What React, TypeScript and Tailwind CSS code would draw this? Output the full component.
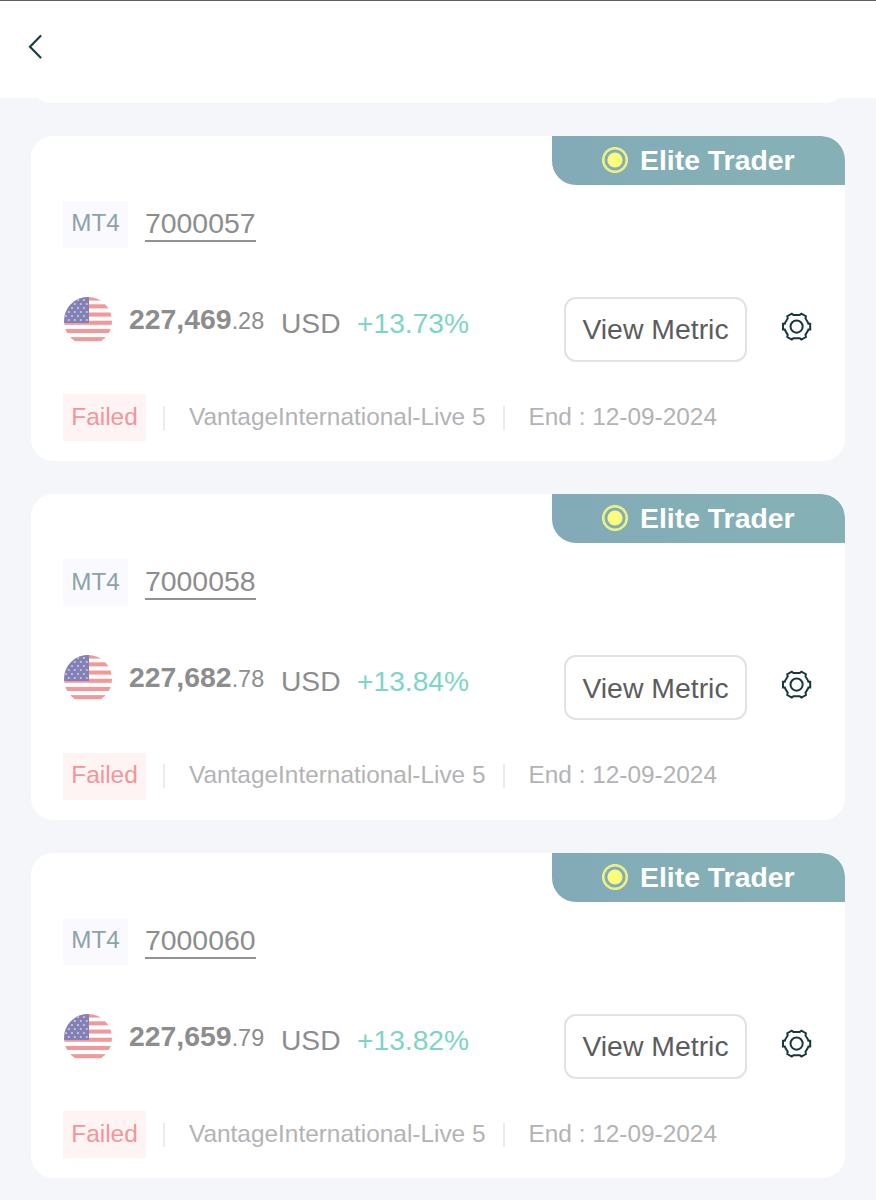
type Account = {
  login: string
  whole: string
  cents: string
  change: string
}

const accounts: Account[] = [
  { login: '7000057', whole: '227,469', cents: '.28', change: '+13.73%' },
  { login: '7000058', whole: '227,682', cents: '.78', change: '+13.84%' },
  { login: '7000060', whole: '227,659', cents: '.79', change: '+13.82%' },
]

export default function App() {
  return (
    <div className="flex h-[1200px] w-[876px] flex-col overflow-hidden bg-[#f5f6f9] font-['Liberation_Sans',Arial,sans-serif]">
      <header className="flex h-[98px] shrink-0 border-t border-[#5f5f61] bg-white pt-[33px] pl-[27px]">
        <button aria-label="Back" className="h-[26px] w-[16px]">
          <svg viewBox="0 0 16 26" className="h-[26px] w-[16px]" fill="none" stroke="#173f45" strokeWidth="2.2">
            <path d="M13.5 2 3 12.8l10.5 10.7" strokeLinecap="round" />
          </svg>
        </button>
      </header>

      <main className="flex flex-col px-[31px]">
        <div className="-mt-[20px] h-[25px] rounded-b-[20px] bg-white" />
        <div className="mt-[33px] flex flex-col gap-[33px]">
          {accounts.map((account) => (
            <AccountCard key={account.login} {...account} />
          ))}
        </div>
      </main>
    </div>
  )
}

function AccountCard({ login, whole, cents, change }: Account) {
  return (
    <section className="flex h-[325.4px] flex-col overflow-hidden rounded-[22px] bg-white">
      <div className="flex h-[49px] w-[293px] items-center self-end rounded-tr-[24px] rounded-bl-[24px] bg-linear-to-r from-[#82aab8] via-[#84afb6] to-[#85b1b6] pb-[1px] pl-[50px]">
        <svg viewBox="0 0 26 26" className="mr-[12px] h-[26px] w-[26px]">
          <circle cx="13" cy="13" r="11.8" fill="none" stroke="#eaf283" strokeWidth="2.6" />
          <circle cx="13" cy="13" r="7.6" fill="#fdfd7c" />
        </svg>
        <span className="text-[28.4px] leading-[34px] font-bold text-white">Elite Trader</span>
      </div>

      <div className="mt-[16px] flex h-[47px] items-start pl-[32px]">
        <span className="flex h-[47px] w-[65px] items-center justify-center bg-[#f9f9fe] pb-[2px] text-[24.2px] text-[#8ba3a9]">
          MT4
        </span>
        <span className="mt-[6px] ml-[17px] h-[35px] border-b-2 border-[#919193] text-[28.4px] leading-[33px] text-[#8d8d8f]">
          {login}
        </span>
      </div>

      <div className="mt-[49px] flex h-[65px] items-start pl-[33px]">
        <Flag />
        <span className="mt-[5px] ml-[17px] w-[137px] leading-[34px] whitespace-nowrap text-[#8d8d8f]">
          <b className="text-[28.4px]">{whole}</b>
          <span className="text-[23.4px]">{cents}</span>
        </span>
        <span className="mt-[9px] ml-[15px] w-[60px] text-[28.2px] leading-[34px] text-[#8d8d8f]">USD</span>
        <span className="mt-[9px] ml-[16px] text-[28.2px] leading-[34px] text-[#7ed4c8]">{change}</span>
        <button className="mr-[33px] ml-auto flex h-[65px] w-[183px] items-center justify-center rounded-[12px] border-2 border-[#dfe2e6] text-[28.4px] text-[#5c5c5e]">
          View Metric
        </button>
        <Gear />
      </div>

      <div className="mt-[32.4px] flex h-[47px] items-center pl-[32px] text-[24.4px] text-[#b3b3b5]">
        <span className="flex h-[47px] w-[83px] items-center justify-center bg-[#fff4f4] pb-[1px] text-[#f3959a]">
          Failed
        </span>
        <span className="ml-[17px] h-[24px] w-[2px] bg-[#ebebee]" />
        <span className="ml-[24px] w-[297px] pb-[1px] whitespace-nowrap">VantageInternational-Live 5</span>
        <span className="ml-[17px] h-[24px] w-[2px] bg-[#ebebee]" />
        <span className="ml-[23.5px] pb-[1px] whitespace-nowrap">End : 12-09-2024</span>
      </div>
    </section>
  )
}

function Gear() {
  return (
    <button aria-label="Settings" className="mt-[14px] mr-[33px] h-[32px] w-[32px]">
      <svg viewBox="-16.6 -15.6 32 32" className="h-[32px] w-[32px]" fill="none" stroke="#17363e" strokeWidth="2">
        <path d="M11.4-4 11.8-2.8H13.6V2.8H11.8L11.4 4 8.9 8.2 9.3 10.4 4.8 13 3.2 11.6H-3.2L-4.8 13-9.3 10.4-8.9 8.2-11.4 4-11.8 2.8H-13.6V-2.8H-11.8L-11.4-4-8.9-8.2-9.3-10.4-4.8-13-3.2-11.6H3.2L4.8-13 9.3-10.4 8.9-8.2Z" />
        <circle r="6.1" />
      </svg>
    </button>
  )
}

const stripes = [-0.5, 7.3, 15.5, 23.7, 31.9, 40.1]
const starRows = [3, 7, 11, 15, 19, 23]

function Flag() {
  return (
    <div className="h-[48px] w-[48px] shrink-0 overflow-hidden rounded-full">
      <svg viewBox="0 0 48 48" className="h-[48px] w-[48px]">
        {stripes.map((y) => (
          <rect key={y} y={y} width="48" height="4.1" fill="#f1999a" />
        ))}
        <rect width="25" height="26" fill="#8280b5" />
        {starRows.map((y, row) =>
          [3, 9, 15, 21].map((x) => (
            <circle key={`${x}-${y}`} cx={x + (row % 2) * 2.8 - 1} cy={y} r="1.1" fill="#cbcae4" />
          )),
        )}
      </svg>
    </div>
  )
}
